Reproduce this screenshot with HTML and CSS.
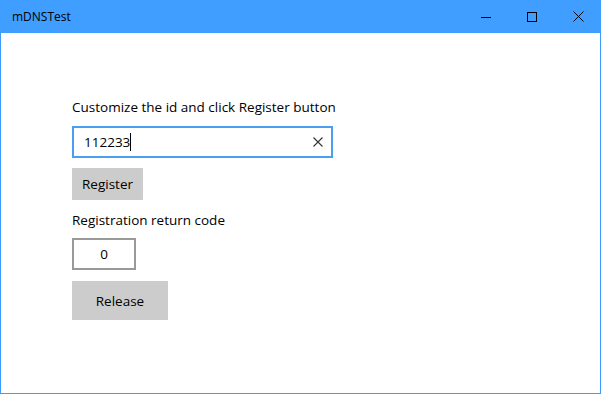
FILE: index.html
```html
<!DOCTYPE html>
<html lang="en">
<head>
  <meta charset="UTF-8">
  <title>mDNSTest</title>
  <link rel="stylesheet" href="styles.css">
</head>
<body>
  <div class="window">
    <div class="titlebar">
      <span class="title">mDNSTest</span>
      <div class="controls">
        <span class="ctl">
          <svg width="10" height="10" viewBox="0 0 10 10"><path d="M0 5.5h10" stroke="#000" stroke-width="1"/></svg>
        </span>
        <span class="ctl">
          <svg width="10" height="10" viewBox="0 0 10 10"><rect x="0.5" y="0.5" width="9" height="9" fill="none" stroke="#000" stroke-width="1"/></svg>
        </span>
        <span class="ctl">
          <svg width="11" height="11" viewBox="0 0 11 11"><path d="M0.5 0.5l10 10M10.5 0.5l-10 10" stroke="#000" stroke-width="1"/></svg>
        </span>
      </div>
    </div>

    <div class="content">
      <p class="label">Customize the id and click Register button</p>
      <div class="textbox">
        <span class="value">112233</span><span class="caret"></span>
        <svg class="clear" width="10" height="10" viewBox="0 0 10 10"><path d="M0.5 0.5l9 9M9.5 0.5l-9 9" stroke="#333" stroke-width="1.1"/></svg>
      </div>
      <button class="btn btn-register">Register</button>
      <p class="label">Registration return code</p>
      <div class="codebox">0</div>
      <button class="btn btn-release">Release</button>
    </div>
  </div>
</body>
</html>
```

FILE: styles.css
```css
html, body {
  margin: 0;
  height: 100%;
}
body {
  font-family: "Open Sans", "Noto Sans", sans-serif;
  color: #000;
  background: #fff;
}
.window {
  box-sizing: border-box;
  width: 601px;
  height: 394px;
  border: 1px solid #3f9cff;
  border-top: none;
  display: flex;
  flex-direction: column;
}
.titlebar {
  height: 33px;
  margin: 0 -1px;
  background: #3f9eff;
  display: flex;
  align-items: center;
  justify-content: space-between;
}
.title {
  padding-left: 12px;
  font-size: 12px;
}
.controls {
  display: flex;
  height: 100%;
}
.ctl {
  width: 46px;
  display: flex;
  align-items: center;
  justify-content: center;
}
.content {
  padding: 64px 0 0 71px;
}
.label {
  margin: 0;
  font-size: 13.5px;
  line-height: 20px;
}
.textbox {
  box-sizing: border-box;
  width: 261px;
  height: 32px;
  margin-top: 9px;
  border: 2px solid #4aa0f0;
  display: flex;
  align-items: center;
  padding: 0 8px 0 10px;
  font-size: 13.5px;
}
.caret {
  width: 1px;
  height: 18px;
  background: #000;
}
.clear {
  margin-left: auto;
}
.btn {
  display: block;
  border: none;
  background: #cccccc;
  font-family: inherit;
  font-size: 13.5px;
  color: #000;
  padding: 0;
}
.btn-register {
  width: 71px;
  height: 32px;
  margin: 10px 0 10px;
}
.codebox {
  box-sizing: border-box;
  width: 64px;
  height: 32px;
  margin-top: 8px;
  border: 2px solid #999;
  display: flex;
  align-items: center;
  justify-content: center;
  font-size: 13.5px;
}
.btn-release {
  width: 96px;
  height: 39px;
  margin-top: 11px;
}
```
